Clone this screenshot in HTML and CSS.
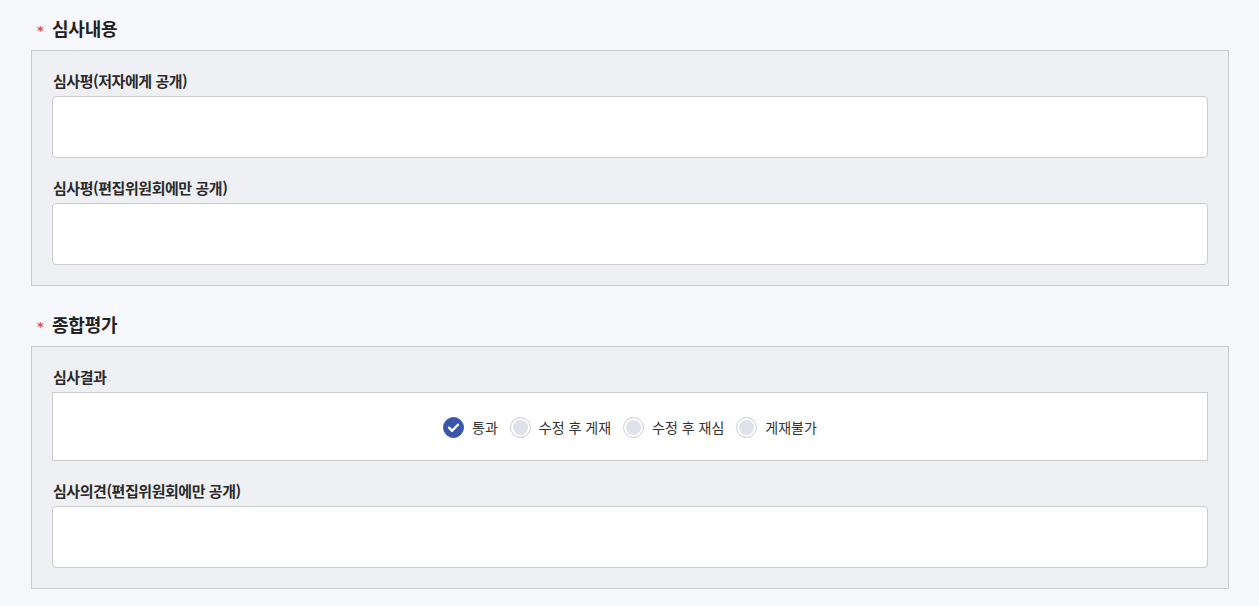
FILE: index.html
```html
<!DOCTYPE html>
<html lang="ko">
<head>
<meta charset="utf-8">
<link rel="stylesheet" href="styles.css">
</head>
<body>
<div class="page">
  <section class="section">
    <h2 class="sec-title"><span class="req">*</span>심사내용</h2>
    <div class="panel">
      <div class="field">
        <div class="label">심사평(저자에게 공개)</div>
        <div class="input"></div>
      </div>
      <div class="field">
        <div class="label">심사평(편집위원회에만 공개)</div>
        <div class="input"></div>
      </div>
    </div>
  </section>
  <section class="section">
    <h2 class="sec-title"><span class="req">*</span>종합평가</h2>
    <div class="panel">
      <div class="field">
        <div class="label">심사결과</div>
        <div class="radio-box">
          <label class="radio"><span class="dot checked"><svg viewBox="0 0 22 22" width="22" height="22"><path d="M5.8 11.2l3.6 3.6 6.8-7" fill="none" stroke="#fff" stroke-width="2.8" stroke-linecap="round" stroke-linejoin="round"/></svg></span>통과</label>
          <label class="radio"><span class="dot"></span>수정 후 게재</label>
          <label class="radio"><span class="dot"></span>수정 후 재심</label>
          <label class="radio"><span class="dot"></span>게재불가</label>
        </div>
      </div>
      <div class="field">
        <div class="label">심사의견(편집위원회에만 공개)</div>
        <div class="input"></div>
      </div>
    </div>
  </section>
</div>
</body>
</html>
```

FILE: styles.css
```css
* { box-sizing: border-box; }
html, body {
  margin: 0;
  padding: 0;
  background: #f7f8fb;
}
body {
  font-family: "Noto Sans CJK KR", "Noto Sans", sans-serif;
  color: #222;
}
.page {
  padding: 18px 30px 0 31px;
}
.section + .section {
  margin-top: 28px;
}
.sec-title {
  margin: 0 0 12px;
  height: 20px;
  font-size: 18px;
  line-height: 20px;
  font-weight: 700;
  letter-spacing: -0.2px;
  color: #222;
  display: flex;
  align-items: center;
}
.req {
  color: #e34b44;
  font-family: "DejaVu Sans", sans-serif;
  font-size: 13px;
  line-height: 14px;
  height: 14px;
  font-weight: 700;
  width: 21px;
  padding-left: 6px;
  padding-top: 3px;
  letter-spacing: 0;
}
.panel {
  background: #eff0f4;
  border: 1px solid #cbcbcd;
  padding: 20px;
}
.field + .field {
  margin-top: 20px;
}
.label {
  font-size: 15px;
  line-height: 20px;
  font-weight: 700;
  letter-spacing: -0.45px;
  color: #2a2a2a;
  margin-bottom: 5px;
  padding-left: 1px;
}
.input {
  height: 62px;
  background: #fff;
  border: 1px solid #cbcbcd;
  border-radius: 4px;
}
.radio-box {
  height: 69px;
  background: #fff;
  border: 1px solid #cbcbcd;
  display: flex;
  justify-content: center;
  align-items: center;
  gap: 12px;
  padding-top: 1px;
}
.radio {
  display: flex;
  align-items: center;
  gap: 8px;
  font-size: 14px;
  color: #333;
  line-height: 20px;
}
.dot {
  width: 21px;
  height: 21px;
  border-radius: 50%;
  background: #dfe2ea;
  border: 1px solid #cfd1d6;
  box-shadow: inset 0 0 0 2px #fff;
  display: flex;
  align-items: center;
  justify-content: center;
  flex: none;
}
.dot.checked {
  background: #3b55a9;
  border-color: #3b55a9;
  box-shadow: none;
}
.dot svg {
  display: block;
  width: 21px;
  height: 21px;
}
```
